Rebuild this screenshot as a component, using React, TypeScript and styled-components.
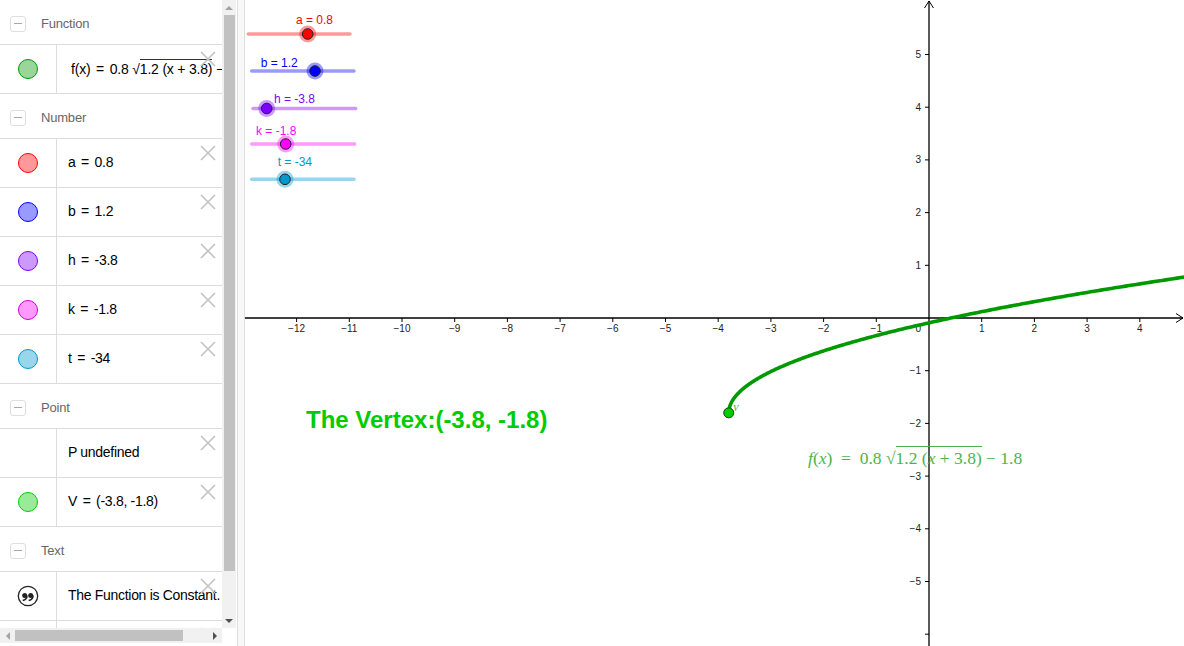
import React from "react";
import styled, { createGlobalStyle } from "styled-components";

const GlobalStyle = createGlobalStyle`
  html, body { margin: 0; padding: 0; width: 1184px; height: 646px; overflow: hidden; background: #fff; }
  body { font-family: "Liberation Sans", Arial, sans-serif; }
  #root { width: 1184px; height: 646px; }
`;

const Page = styled.div`
  display: flex;
  width: 1184px;
  height: 646px;
  background: #fff;
`;

const LeftPanel = styled.aside`
  width: 237px;
  flex: none;
  display: flex;
  flex-direction: column;
  background: #fff;
  font-family: "Liberation Sans", Arial, sans-serif;
`;

const ListArea = styled.div`
  display: flex;
  height: 628px;
`;

const List = styled.div`
  width: 222px;
  height: 628px;
  overflow: hidden;
  flex: none;
`;

const VScroll = styled.div`
  width: 14px;
  flex: none;
  background: #f1f1f1;
  display: flex;
  flex-direction: column;
  align-items: center;
`;

const ScrollBtn = styled.div`
  width: 14px;
  height: 15px;
  flex: none;
  display: flex;
  align-items: center;
  justify-content: center;
`;

const Arrow = styled.span<{ $dir: "up" | "down" | "left" | "right" }>`
  width: 0;
  height: 0;
  ${({ $dir }) =>
    $dir === "up"
      ? "border-left:4px solid transparent;border-right:4px solid transparent;border-bottom:4px solid #a3a3a3;"
      : $dir === "down"
      ? "border-left:4px solid transparent;border-right:4px solid transparent;border-top:4px solid #505050;"
      : $dir === "left"
      ? "border-top:4px solid transparent;border-bottom:4px solid transparent;border-right:4px solid #a3a3a3;"
      : "border-top:4px solid transparent;border-bottom:4px solid transparent;border-left:4px solid #505050;"}
`;

const VThumb = styled.div`
  width: 11px;
  height: 556px;
  background: #c1c1c1;
  flex: none;
`;

const Spacer = styled.div`
  flex: 1;
`;

const Gap = styled.div`
  width: 1px;
  flex: none;
  background: #fff;
`;

const BottomBar = styled.div`
  height: 18px;
  display: flex;
  align-items: flex-start;
`;

const HScroll = styled.div`
  width: 222px;
  height: 15px;
  background: #f1f1f1;
  display: flex;
  align-items: center;
`;

const HBtn = styled.div`
  width: 15px;
  height: 15px;
  flex: none;
  display: flex;
  align-items: center;
  justify-content: center;
`;

const HThumb = styled.div`
  width: 168px;
  height: 11px;
  background: #c1c1c1;
  flex: none;
`;

const Divider = styled.div`
  width: 8px;
  flex: none;
  box-sizing: border-box;
  border-left: 1px solid #dedede;
  border-right: 1px solid #dedede;
  background: #f8f8f8;
`;

const GroupHeader = styled.div`
  height: 45px;
  box-sizing: border-box;
  padding-top: 3px;
  border-bottom: 1px solid #dddddd;
  display: flex;
  align-items: center;
  padding-left: 10px;
  gap: 15px;
  color: #666;
  font-size: 13px;
  letter-spacing: -0.2px;
`;

const Collapse = styled.span`
  width: 16px;
  height: 16px;
  box-sizing: border-box;
  border: 1px solid #dedede;
  border-radius: 3px;
  display: flex;
  align-items: center;
  justify-content: center;
  &::before {
    content: "";
    width: 8px;
    height: 1px;
    background: #a8a8a8;
  }
`;

const Row = styled.div`
  height: 48px;
  border-bottom: 1px solid #dddddd;
  display: flex;
  position: relative;
`;

const Marker = styled.div`
  width: 56px;
  flex: none;
  border-right: 1px solid #dddddd;
  display: flex;
  align-items: center;
  justify-content: center;
`;

const Dot = styled.span<{ $fill: string; $stroke: string }>`
  width: 20px;
  height: 20px;
  box-sizing: border-box;
  border-radius: 50%;
  background: ${(p) => p.$fill};
  border: 1px solid ${(p) => p.$stroke};
`;

const Content = styled.div`
  flex: 1;
  display: flex;
  align-items: center;
  padding-left: 11px;
  padding-bottom: 2px;
  font-size: 14px;
  letter-spacing: -0.3px;
  color: #000;
  white-space: pre;
  overflow: hidden;
`;

const Eq = styled.span`
  margin: 0 2px;
`;

const FxText = styled.span`
  margin-left: 3px;
  letter-spacing: -0.2px;
  display: inline-flex;
  align-items: baseline;
  white-space: pre;
`;

const Radicand = styled.span`
  border-top: 1px solid #333;
  padding-top: 1px;
  white-space: pre;
`;

const CloseBtn = styled.svg`
  position: absolute;
  top: 6px;
  right: 6px;
  width: 16px;
  height: 16px;
`;

const Canvas = styled.main`
  flex: 1;
  position: relative;
  overflow: hidden;
  background: #fff;
`;

const Graph = styled.svg`
  display: block;
  width: 939px;
  height: 646px;
`;

const Formula = styled.div`
  position: absolute;
  left: 563px;
  top: 446px;
  font-family: "Liberation Serif", "Times New Roman", serif;
  font-size: 17.5px;
  color: #4cb34c;
  white-space: pre;
  display: flex;
  align-items: baseline;
`;

const FormulaRad = styled.span`
  border-top: 1px solid #4cb34c;
  padding-top: 1px;
`;

const Close = () => (
  <CloseBtn viewBox="0 0 16 16">
    <path d="M1 1 L15 15 M15 1 L1 15" stroke="#c4c4c4" strokeWidth="1.7" fill="none" />
  </CloseBtn>
);

const QuoteIcon = () => (
  <svg width="22" height="22" viewBox="-11 -11 22 22">
    <circle cx="0" cy="0" r="9.7" fill="#fff" stroke="#222" strokeWidth="1.3" />
    {[-3.3, 2.7].map((x) => (
      <g key={x}>
        <circle cx={x} cy={-0.6} r={2.5} fill="#222" />
        <path d={`M ${x + 2.3} -0.6 Q ${x + 2.3} 3.2 ${x - 2} 4.6`} stroke="#222" strokeWidth="1.6" fill="none" />
      </g>
    ))}
  </svg>
);

type NumItem = { name: string; value: string; fill: string; stroke: string };

const numbers: NumItem[] = [
  { name: "a", value: "0.8", fill: "#ff9999", stroke: "#ff0000" },
  { name: "b", value: "1.2", fill: "#9999ff", stroke: "#0000ff" },
  { name: "h", value: "-3.8", fill: "#cc99ff", stroke: "#7f00ff" },
  { name: "k", value: "-1.8", fill: "#ff99ff", stroke: "#cc00cc" },
  { name: "t", value: "-34", fill: "#99d6eb", stroke: "#0099cc" },
];

const S = 52.7;
const OX = 684;
const OY = 318;
const tx = (x: number) => OX + x * S;
const ty = (y: number) => OY - y * S;

const sliders = [
  { label: "a = 0.8", color: "#ff0000", x1: 3.3, x2: 105, y: 34, t: 62.7, lx: 51, ly: 24 },
  { label: "b = 1.2", color: "#0000ff", x1: 6.7, x2: 109, y: 71, t: 70, lx: 15.7, ly: 67 },
  { label: "h = -3.8", color: "#7f00ff", x1: 8, x2: 110.7, y: 108.5, t: 21.7, lx: 29, ly: 103 },
  { label: "k = -1.8", color: "#ff00ff", x1: 6.7, x2: 109.7, y: 144, t: 40.7, lx: 11, ly: 135 },
  { label: "t = -34", color: "#0099cc", x1: 6.7, x2: 109, y: 179.3, t: 40, lx: 32.7, ly: 166 },
];

const f = (x: number) => 0.8 * Math.sqrt(Math.max(0, 1.2 * (x + 3.8))) - 1.8;

function curvePath() {
  const pts: string[] = [];
  const x0 = -3.8;
  const x1 = 5.0;
  for (let i = 0; i <= 240; i++) {
    const x = x0 + (x1 - x0) * Math.pow(i / 240, 2);
    pts.push(`${tx(x).toFixed(2)},${ty(f(x)).toFixed(2)}`);
  }
  return "M" + pts.join(" L");
}

const minus = (n: number) => (n < 0 ? "\u2212" + Math.abs(n) : String(n));

export default function App() {
  const xTicks: number[] = [];
  for (let i = -12; i <= 4; i++) if (i !== 0) xTicks.push(i);
  const yTicks = [5, 4, 3, 2, 1, -1, -2, -3, -4, -5];

  return (
    <>
      <GlobalStyle />
      <Page>
        <LeftPanel>
          <ListArea>
            <List>
              <GroupHeader>
                <Collapse />
                Function
              </GroupHeader>
              <Row>
                <Marker>
                  <Dot $fill="#99d699" $stroke="#009900" />
                </Marker>
                <Content>
                  <FxText>
                    {"f(x) "}
                    <Eq>=</Eq>
                    {" 0.8 √"}
                    <Radicand>{"1.2 (x + 3.8)"}</Radicand>
                    {" − 1.8"}
                  </FxText>
                </Content>
                <Close />
              </Row>
              <GroupHeader>
                <Collapse />
                Number
              </GroupHeader>
              {numbers.map((n) => (
                <Row key={n.name}>
                  <Marker>
                    <Dot $fill={n.fill} $stroke={n.stroke} />
                  </Marker>
                  <Content>
                    {n.name + " "}
                    <Eq>=</Eq>
                    {" " + n.value}
                  </Content>
                  <Close />
                </Row>
              ))}
              <GroupHeader>
                <Collapse />
                Point
              </GroupHeader>
              <Row>
                <Marker />
                <Content>P undefined</Content>
                <Close />
              </Row>
              <Row>
                <Marker>
                  <Dot $fill="#99eb99" $stroke="#00cc00" />
                </Marker>
                <Content>
                  {"V "}
                  <Eq>=</Eq>
                  {" (-3.8, -1.8)"}
                </Content>
                <Close />
              </Row>
              <GroupHeader>
                <Collapse />
                Text
              </GroupHeader>
              <Row>
                <Marker>
                  <QuoteIcon />
                </Marker>
                <Content>The Function is Constant.</Content>
                <Close />
              </Row>
              <Row>
                <Marker />
                <Content />
                <Close />
              </Row>
            </List>
            <VScroll>
              <ScrollBtn>
                <Arrow $dir="up" />
              </ScrollBtn>
              <VThumb />
              <Spacer />
              <ScrollBtn>
                <Arrow $dir="down" />
              </ScrollBtn>
            </VScroll>
            <Gap />
          </ListArea>
          <BottomBar>
            <HScroll>
              <HBtn>
                <Arrow $dir="left" />
              </HBtn>
              <HThumb />
              <Spacer />
              <HBtn>
                <Arrow $dir="right" />
              </HBtn>
            </HScroll>
          </BottomBar>
        </LeftPanel>
        <Divider />
        <Canvas>
          <Graph viewBox="0 0 939 646">
            {/* axes */}
            <line x1="0" y1={OY} x2="938" y2={OY} stroke="#000" strokeWidth="1.3" />
            <path d={`M931 ${OY - 4.5} L938 ${OY} L931 ${OY + 4.5}`} stroke="#000" strokeWidth="1" fill="none" />
            <line x1={OX} y1="1" x2={OX} y2="646" stroke="#000" strokeWidth="1.3" />
            <path d={`M${OX - 4.5} 8 L${OX} 1 L${OX + 4.5} 8`} stroke="#000" strokeWidth="1" fill="none" />
            {xTicks.map((i) => (
              <g key={"x" + i}>
                <line x1={tx(i)} y1={OY} x2={tx(i)} y2={OY + 4} stroke="#000" strokeWidth="1" />
                <text x={tx(i)} y={332} fontSize="10" fill="#222" textAnchor="middle" fontFamily="Liberation Sans, Arial, sans-serif">
                  {minus(i)}
                </text>
              </g>
            ))}
            <text x={676} y={332} fontSize="10" fill="#222" textAnchor="end" fontFamily="Liberation Sans, Arial, sans-serif">
              0
            </text>
            {[...yTicks, -6].map((j) => (
              <line key={"yt" + j} x1={OX - 4} y1={ty(j)} x2={OX} y2={ty(j)} stroke="#000" strokeWidth="1" />
            ))}
            {yTicks.map((j) => (
              <text key={"y" + j} x={676} y={ty(j) + 3.5} fontSize="10" fill="#222" textAnchor="end" fontFamily="Liberation Sans, Arial, sans-serif">
                {minus(j)}
              </text>
            ))}

            {/* sliders */}
            {sliders.map((s) => (
              <g key={s.label}>
                <line x1={s.x1} y1={s.y} x2={s.x2} y2={s.y} stroke={s.color} strokeOpacity="0.4" strokeWidth="3.5" strokeLinecap="round" />
                <circle cx={s.t} cy={s.y} r="8.5" fill={s.color} fillOpacity="0.4" />
                <circle cx={s.t} cy={s.y} r="5.3" fill={s.color} stroke="#222" strokeWidth="1" />
                <text x={s.lx} y={s.ly} fontSize="12" fill={s.color} fontFamily="Liberation Sans, Arial, sans-serif">
                  {s.label}
                </text>
              </g>
            ))}

            {/* vertex text */}
            <text x={61} y={428} fontSize="24" fontWeight="bold" fill="#00cc00" fontFamily="Liberation Sans, Arial, sans-serif">
              The Vertex:(-3.8, -1.8)
            </text>

            {/* function graph */}
            <path d={curvePath()} stroke="#009900" strokeWidth="3.6" fill="none" strokeLinecap="round" />
            <circle cx={tx(-3.8)} cy={ty(-1.8)} r="5" fill="#00cc00" stroke="#1a3a1a" strokeWidth="1" />
            <text x={488} y={411} fontSize="9" fontStyle="italic" fill="#22aa22" fontFamily="Liberation Serif, serif">
              V
            </text>
          </Graph>
          <Formula>
            <i>f</i>(<i>x</i>){"  =  0.8 √"}
            <FormulaRad>
              {"1.2 ("}
              <i>x</i>
              {" + 3.8)"}
            </FormulaRad>
            {" − 1.8"}
          </Formula>
        </Canvas>
      </Page>
    </>
  );
}
